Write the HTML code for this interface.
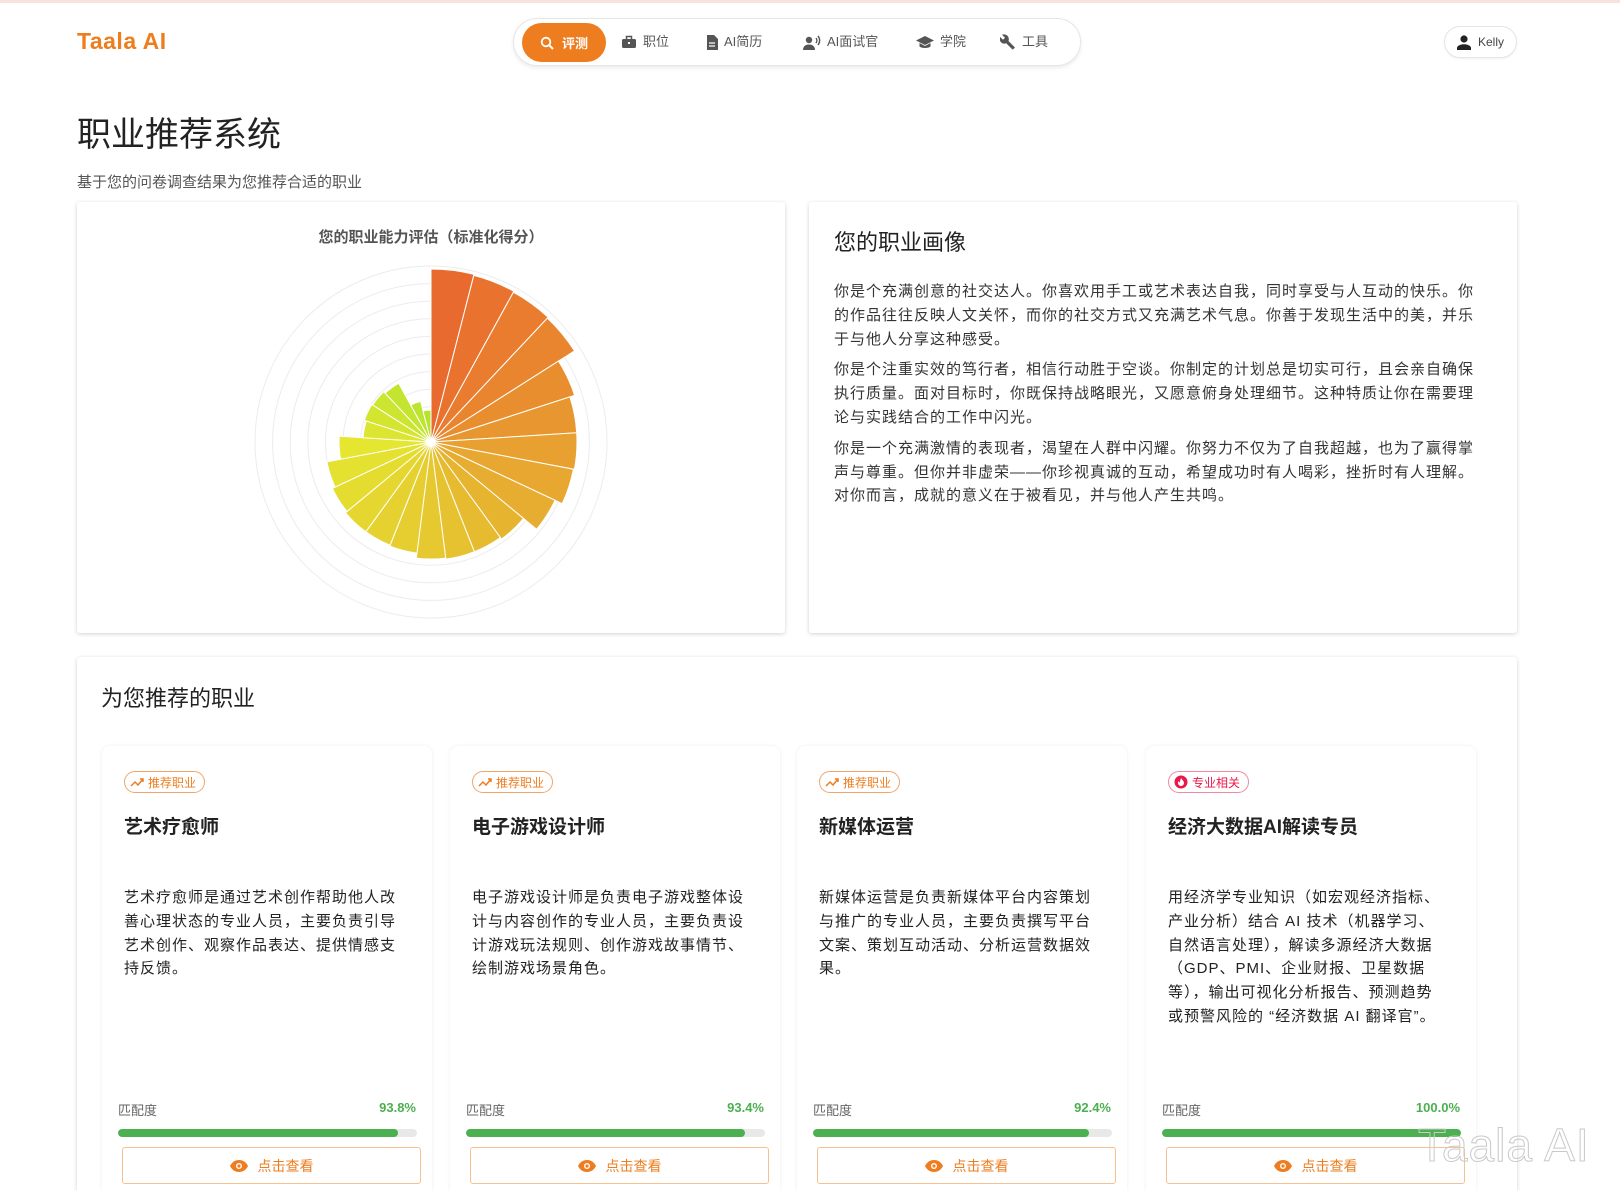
<!DOCTYPE html>
<html style="width:1620px;height:1191px;overflow:hidden"><head><meta charset="utf-8"><style>
*{margin:0;padding:0;box-sizing:border-box}
body{width:1620px;height:1191px;overflow:hidden;background:#fff;font-family:"Liberation Sans","Noto Sans CJK SC",sans-serif;color:#222;position:relative}
.topline{position:absolute;left:0;top:0;width:1620px;height:3px;background:#f6e3dc}
.logo{position:absolute;left:77px;top:28px;font-size:23px;font-weight:bold;color:#ee7d1f;letter-spacing:.5px}
.nav{position:absolute;left:513px;top:18px;width:568px;height:48px;border:1px solid #e6e6e6;border-radius:24px;box-shadow:0 2px 4px rgba(0,0,0,.08);background:#fff}
.nav .it{position:absolute;top:0;height:46px;line-height:46px;font-size:13px;color:#555;display:flex;align-items:center;gap:6px}
.nav .act{position:absolute;left:8px;top:4px;width:84px;height:39px;border-radius:20px;background:#ee7d1f;color:#fff;font-size:13px;font-weight:bold;display:flex;align-items:center;justify-content:center;gap:8px}
.kelly{position:absolute;left:1444px;top:26px;width:73px;height:32px;border:1px solid #e5e5e5;border-radius:16px;font-size:12px;color:#444;display:flex;align-items:center;justify-content:center;gap:7px;box-shadow:0 1px 2px rgba(0,0,0,.06)}
h1{position:absolute;left:77px;top:107px;font-size:34px;font-weight:normal;color:#222}
.sub{position:absolute;left:77px;top:171px;font-size:15px;color:#555}
.card{position:absolute;background:#fff;box-shadow:0 1px 4px rgba(0,0,0,.18);border-radius:3px}
.ctitle{position:absolute;left:0;width:100%;top:226px;text-align:center;font-size:15px;font-weight:bold;color:#555}
.rc h2{position:absolute;left:25px;top:23px;font-size:22px;font-weight:normal;color:#222}
.rc .txt{position:absolute;left:25px;top:78px;width:646px;font-size:15px;letter-spacing:1px;line-height:23.8px;color:#333}
.rc .txt p{margin-bottom:7px}
.bc h2{position:absolute;left:24px;top:24px;font-size:22px;font-weight:normal;color:#222}
.job{position:absolute;top:746px;width:330px;height:445px;background:#fff;border-radius:8px 8px 0 0;box-shadow:0 0 4px rgba(0,0,0,.07)}
.chip{position:absolute;left:22px;top:25px;height:22px;padding:0 8px 0 5px;border:1px solid #f1a56a;border-radius:11px;color:#ee7d1f;font-size:12px;display:flex;align-items:center;gap:4px}
.chip.red{border-color:#f08aa0;color:#e8194a}
.job h3{position:absolute;left:22px;top:66px;font-size:19px;font-weight:bold;color:#222}
.job .d{position:absolute;left:22px;top:140px;width:280px;font-size:15px;letter-spacing:1px;line-height:23.8px;color:#222}
.job .ml{position:absolute;left:16px;top:354px;font-size:13px;color:#666}
.job .mv{position:absolute;right:16px;top:354px;font-size:13px;font-weight:bold;color:#4caf50}
.job .bar{position:absolute;left:16px;top:383px;width:299px;height:8px;background:#e8e8e8;border-radius:4px;overflow:hidden}
.job .bar i{display:block;height:100%;background:#4caf50;border-radius:4px}
.job .btn{position:absolute;left:20px;top:401px;width:299px;height:37px;border:1px solid #f6c08f;border-radius:3px;color:#ee7d1f;font-size:14px;display:flex;align-items:center;justify-content:center;gap:10px}
.wm{position:absolute;left:1418px;top:1118px;font-size:46px;color:transparent;-webkit-text-stroke:1px #c9c9c9;font-family:"Liberation Sans",sans-serif;letter-spacing:1px}
</style></head><body>
<div class="topline"></div>
<div class="logo">Taala AI</div>
<div class="nav">
 <div class="act"><svg width="14" height="14" viewBox="0 0 14 14"><circle cx="6" cy="6" r="4.3" fill="none" stroke="#fff" stroke-width="1.8"/><path d="M9 9l4 4" stroke="#fff" stroke-width="2"/></svg>评测</div>
 <div class="it" style="left:107px"><svg width="16" height="14" viewBox="0 0 16 14"><rect x="1" y="4" width="14" height="9" rx="1.5" fill="#555"/><rect x="5.5" y="1.5" width="5" height="3.5" fill="none" stroke="#555" stroke-width="1.5"/><rect x="7" y="7" width="2" height="2" fill="#fff"/></svg>职位</div>
 <div class="it" style="left:192px"><svg width="12" height="15" viewBox="0 0 12 15"><path d="M1 0h7l4 4v11H1z" fill="#555"/><path d="M3 8h6M3 11h6" stroke="#fff" stroke-width="1.2"/></svg>AI简历</div>
 <div class="it" style="left:289px"><svg width="18" height="15" viewBox="0 0 18 15"><circle cx="6" cy="5" r="3.2" fill="#555"/><path d="M0 15c0-4 3-5.5 6-5.5s6 1.5 6 5.5z" fill="#555"/><path d="M13 3a4 4 0 010 5M15 1a7 7 0 010 9" stroke="#555" stroke-width="1.4" fill="none"/></svg>AI面试官</div>
 <div class="it" style="left:402px"><svg width="18" height="14" viewBox="0 0 18 14"><path d="M9 1L0 5.5 9 10l9-4.5z" fill="#555"/><path d="M3.5 8v3.5c2 2 9 2 11 0V8L9 11z" fill="#555"/></svg>学院</div>
 <div class="it" style="left:486px"><svg width="16" height="16" viewBox="0 0 16 16"><path d="M14.5 13L8.5 7c.7-1.8.3-3.8-1.1-5.2C5.9.3 3.7 0 2 .8l3 3-2 2-3.1-3C-.9 4.5-.4 6.7 1 8.2c1.4 1.4 3.4 1.8 5.2 1.1l6 6c.3.3.7.3 1 0l1.4-1.4c.3-.2.3-.7-.1-.9z" fill="#555"/></svg>工具</div>
</div>
<div class="kelly"><svg width="14" height="15" viewBox="0 0 14 15"><circle cx="7" cy="4" r="3.6" fill="#222"/><path d="M0 15v-2c0-2.5 4-3.8 7-3.8s7 1.3 7 3.8v2z" fill="#222"/></svg>Kelly</div>
<h1>职业推荐系统</h1>
<div class="sub">基于您的问卷调查结果为您推荐合适的职业</div>

<div class="card" style="left:77px;top:202px;width:708px;height:431px">
 <div class="ctitle" style="top:24px">您的职业能力评估（标准化得分）</div>
 <svg id="polar" width="708" height="431" style="position:absolute;left:0;top:0"></svg>
</div>

<div class="card rc" style="left:809px;top:202px;width:708px;height:431px">
 <h2>您的职业画像</h2>
 <div class="txt">
 <p>你是个充满创意的社交达人。你喜欢用手工或艺术表达自我，同时享受与人互动的快乐。你的作品往往反映人文关怀，而你的社交方式又充满艺术气息。你善于发现生活中的美，并乐于与他人分享这种感受。</p>
 <p>你是个注重实效的笃行者，相信行动胜于空谈。你制定的计划总是切实可行，且会亲自确保执行质量。面对目标时，你既保持战略眼光，又愿意俯身处理细节。这种特质让你在需要理论与实践结合的工作中闪光。</p>
 <p>你是一个充满激情的表现者，渴望在人群中闪耀。你努力不仅为了自我超越，也为了赢得掌声与尊重。但你并非虚荣——你珍视真诚的互动，希望成功时有人喝彩，挫折时有人理解。对你而言，成就的意义在于被看见，并与他人产生共鸣。</p>
 </div>
</div>

<div class="card bc" style="left:77px;top:657px;width:1440px;height:534px;border-radius:3px 3px 0 0">
 <h2>为您推荐的职业</h2>
</div>

<div class="job" style="left:102px">
 <div class="chip"><svg width="14" height="10" viewBox="0 0 14 10"><path d="M1 9l4-4 3 3 5-6M10 2h3v3" stroke="#ee7d1f" stroke-width="1.5" fill="none"/></svg>推荐职业</div>
 <h3>艺术疗愈师</h3>
 <div class="d">艺术疗愈师是通过艺术创作帮助他人改善心理状态的专业人员，主要负责引导艺术创作、观察作品表达、提供情感支持反馈。</div>
 <div class="ml">匹配度</div><div class="mv">93.8%</div>
 <div class="bar"><i style="width:93.8%"></i></div>
 <div class="btn"><svg width="18" height="12" viewBox="0 0 18 12"><path d="M0 6C2 2 5 0 9 0s7 2 9 6c-2 4-5 6-9 6S2 10 0 6z" fill="#ee7d1f"/><circle cx="9" cy="6" r="3" fill="#fff"/><circle cx="9" cy="6" r="1.6" fill="#ee7d1f"/></svg>点击查看</div>
</div>
<div class="job" style="left:450px">
 <div class="chip"><svg width="14" height="10" viewBox="0 0 14 10"><path d="M1 9l4-4 3 3 5-6M10 2h3v3" stroke="#ee7d1f" stroke-width="1.5" fill="none"/></svg>推荐职业</div>
 <h3>电子游戏设计师</h3>
 <div class="d">电子游戏设计师是负责电子游戏整体设计与内容创作的专业人员，主要负责设计游戏玩法规则、创作游戏故事情节、绘制游戏场景角色。</div>
 <div class="ml">匹配度</div><div class="mv">93.4%</div>
 <div class="bar"><i style="width:93.4%"></i></div>
 <div class="btn"><svg width="18" height="12" viewBox="0 0 18 12"><path d="M0 6C2 2 5 0 9 0s7 2 9 6c-2 4-5 6-9 6S2 10 0 6z" fill="#ee7d1f"/><circle cx="9" cy="6" r="3" fill="#fff"/><circle cx="9" cy="6" r="1.6" fill="#ee7d1f"/></svg>点击查看</div>
</div>
<div class="job" style="left:797px">
 <div class="chip"><svg width="14" height="10" viewBox="0 0 14 10"><path d="M1 9l4-4 3 3 5-6M10 2h3v3" stroke="#ee7d1f" stroke-width="1.5" fill="none"/></svg>推荐职业</div>
 <h3>新媒体运营</h3>
 <div class="d">新媒体运营是负责新媒体平台内容策划与推广的专业人员，主要负责撰写平台文案、策划互动活动、分析运营数据效果。</div>
 <div class="ml">匹配度</div><div class="mv">92.4%</div>
 <div class="bar"><i style="width:92.4%"></i></div>
 <div class="btn"><svg width="18" height="12" viewBox="0 0 18 12"><path d="M0 6C2 2 5 0 9 0s7 2 9 6c-2 4-5 6-9 6S2 10 0 6z" fill="#ee7d1f"/><circle cx="9" cy="6" r="3" fill="#fff"/><circle cx="9" cy="6" r="1.6" fill="#ee7d1f"/></svg>点击查看</div>
</div>
<div class="job" style="left:1146px">
 <div class="chip red"><svg width="14" height="14" viewBox="0 0 14 14"><circle cx="7" cy="7" r="6.5" fill="#e8194a"/><path d="M7 3c1 2 3 3 3 5a3 3 0 01-6 0c0-1 .5-1.7 1-2 0 1 .5 1.5 1 1.5C6 6 6.5 4.5 7 3z" fill="#fff"/></svg>专业相关</div>
 <h3>经济大数据AI解读专员</h3>
 <div class="d">用经济学专业知识（如宏观经济指标、产业分析）结合 AI 技术（机器学习、自然语言处理），解读多源经济大数据（GDP、PMI、企业财报、卫星数据等），输出可视化分析报告、预测趋势或预警风险的 “经济数据 AI 翻译官”。</div>
 <div class="ml">匹配度</div><div class="mv">100.0%</div>
 <div class="bar"><i style="width:100%"></i></div>
 <div class="btn"><svg width="18" height="12" viewBox="0 0 18 12"><path d="M0 6C2 2 5 0 9 0s7 2 9 6c-2 4-5 6-9 6S2 10 0 6z" fill="#ee7d1f"/><circle cx="9" cy="6" r="3" fill="#fff"/><circle cx="9" cy="6" r="1.6" fill="#ee7d1f"/></svg>点击查看</div>
</div>
<div class="wm">Taala AI</div>
<script>
(function(){
var s=document.getElementById('polar'),cx=354,cy=240,h='';
for(var k=1;k<=10;k++){h+='<circle cx="'+cx+'" cy="'+cy+'" r="'+(17.6*k)+'" fill="none" stroke="#ececec" stroke-width="1"/>';}
var r=[173,172,171,170,151,146,146,145,137,120,118,118,117,112,111,111,109,106,92,68,70,69,67,42,32];
var n=r.length,st=360/n;
var cols=[[233,106,46],[232,160,48],[230,200,48],[228,230,48],[180,228,48]];
function col(t){var p=t*(cols.length-1),i=Math.min(Math.floor(p),cols.length-2),f=p-i,a=cols[i],b=cols[i+1];return 'rgb('+[0,1,2].map(function(j){return Math.round(a[j]+(b[j]-a[j])*f)}).join(',')+')';}
for(var i=0;i<n;i++){var a0=(i*st-90)*Math.PI/180,a1=((i+1)*st-90)*Math.PI/180,R=r[i];
var x0=cx+R*Math.cos(a0),y0=cy+R*Math.sin(a0),x1=cx+R*Math.cos(a1),y1=cy+R*Math.sin(a1);
h+='<path d="M'+cx+' '+cy+'L'+x0.toFixed(1)+' '+y0.toFixed(1)+'A'+R+' '+R+' 0 0 1 '+x1.toFixed(1)+' '+y1.toFixed(1)+'Z" fill="'+col(i/(n-1))+'" stroke="#fff" stroke-width="1"/>';}
h+='<circle cx="'+cx+'" cy="'+cy+'" r="4" fill="#fff"/>';
s.innerHTML=h;})();
</script>
</body></html>
